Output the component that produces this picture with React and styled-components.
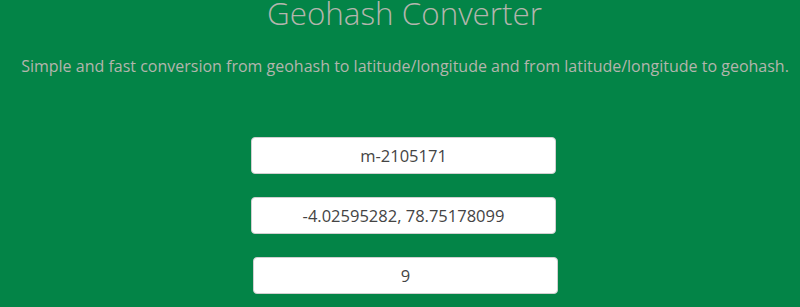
import React, { useState } from "react";
import styled, { createGlobalStyle } from "styled-components";

const GlobalStyle = createGlobalStyle`
  html, body {
    margin: 0;
    padding: 0;
    background-color: #038447;
  }
  body {
    font-family: "Open Sans", "Liberation Sans", sans-serif;
    overflow: hidden;
  }
`;

const Page = styled.div`
  box-sizing: border-box;
  display: flex;
  flex-direction: column;
  align-items: center;
  width: 100vw;
  height: 307px;
  padding-left: 7px;
  background-color: #038447;
`;

const Title = styled.h1`
  margin: 0;
  padding-left: 2px;
  font-size: 31.4px;
  font-weight: 300;
  line-height: 26.4px;
  color: #b3b5ad;
`;

const Subtitle = styled.p`
  margin: 28.6px 0 0 0;
  padding-left: 3px;
  font-size: 16px;
  line-height: 22.4px;
  color: #b3b5ad;
  white-space: nowrap;
`;

const Form = styled.form`
  display: flex;
  flex-direction: column;
  align-items: center;
  gap: 23px;
  margin-top: 59.6px;
`;

const Field = styled.input`
  box-sizing: border-box;
  width: 305px;
  height: 37px;
  margin-left: ${(p) => p.$shift || 0}px;
  border: 1px solid #d0d0d0;
  border-radius: 4px;
  background: #fff;
  font-family: inherit;
  font-size: 16.5px;
  color: #444;
  text-align: center;
  outline: none;
`;

const App = () => {
  const [hash, setHash] = useState("m-2105171");
  const [coords, setCoords] = useState("-4.02595282, 78.75178099");
  const [precision, setPrecision] = useState("9");

  return (
    <Page>
      <GlobalStyle />
      <Title>Geohash Converter</Title>
      <Subtitle>
        Simple and fast conversion from geohash to latitude/longitude and from
        latitude/longitude to geohash.
      </Subtitle>
      <Form onSubmit={(e) => e.preventDefault()}>
        <Field value={hash} onChange={(e) => setHash(e.target.value)} />
        <Field value={coords} onChange={(e) => setCoords(e.target.value)} />
        <Field
          $shift={4}
          value={precision}
          onChange={(e) => setPrecision(e.target.value)}
        />
      </Form>
    </Page>
  );
};

export default App;
